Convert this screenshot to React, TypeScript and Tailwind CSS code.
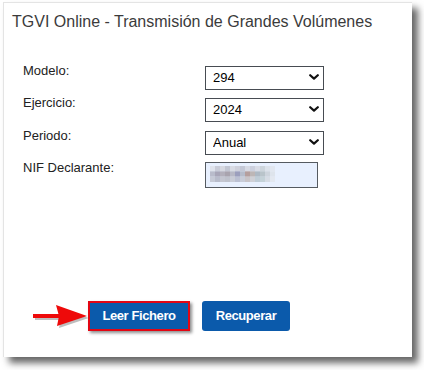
import type { ReactNode } from 'react';

const FONT = "font-['Liberation_Sans',Arial,sans-serif]";

// blurred NIF value, drawn as a pixel mosaic
const MOSAIC = [
  ['#dfe3ec', '#c9ccd8', '#d6d8e0', '#c2c6d2', '#d8dbe4', '#cfd1dc', '#c4c8d6', '#d7dae4', '#ccd0de', '#d9dce6', '#cdd5dc', '#dce2ea', '#e2e7f0'],
  ['#b9bccb', '#a8a6b8', '#b3b0bb', '#a9a4ae', '#b8b9c6', '#9c9fbd', '#b6bccb', '#b59f9e', '#bdb6b6', '#aeb9c4', '#b9c4ca', '#cdd4dc', '#dee4ec'],
  ['#c6cad6', '#b8bccb', '#c4c6d0', '#bfc2cc', '#c9ccd6', '#bbc0d2', '#c8ccd8', '#c8c4c8', '#cfd0d6', '#bfccd6', '#c4d2d8', '#d6dce4', '#e3e8f0'],
];

function Mosaic() {
  return (
    <svg width="65" height="16" viewBox="0 0 65 16" className="block">
      {MOSAIC.map((row, r) =>
        row.map((c, i) => (
          <rect key={`${r}-${i}`} x={i * 5} y={r * 5.33} width="5" height="5.4" fill={c} />
        ))
      )}
    </svg>
  );
}

function Chevron() {
  return (
    <svg width="10" height="6" viewBox="0 0 10 6" className="pointer-events-none absolute right-[5px] top-1/2 -translate-y-1/2">
      <path d="M1.2 1.2 L5 4.6 L8.8 1.2" fill="none" stroke="#111" strokeWidth="2.2" strokeLinecap="round" strokeLinejoin="round" />
    </svg>
  );
}

function Select({ value }: { value: string }) {
  return (
    <div className="relative w-[119px] h-6">
      <select
        defaultValue={value}
        className="appearance-none w-full h-full border border-[#474c52] bg-white pl-[7px] text-[13px] leading-none text-black outline-none"
      >
        <option value={value}>{value}</option>
      </select>
      <Chevron />
    </div>
  );
}

function Row({ label, mt, children }: { label: string; mt: string; children: ReactNode }) {
  return (
    <div className={`flex items-start ${mt}`}>
      <span className="w-[182px] -mt-[2px] text-[13px] leading-4 text-[#222]">{label}</span>
      {children}
    </div>
  );
}

function RedArrow() {
  return (
    <svg width="57" height="30" viewBox="0 0 57 30" className="block">
      <g transform="translate(2 2)" fill="#8a8a8a" opacity="0.55">
        <rect x="2" y="13" width="26" height="4" />
        <path d="M25 4 L56 15 L26 25 L28 15 Z" />
      </g>
      <rect x="2" y="13" width="26" height="4" fill="#ee0a0a" />
      <path d="M25 4 L56 15 L26 25 L28 15 Z" fill="#ee0a0a" />
    </svg>
  );
}

export default function App() {
  return (
    <div className={`w-[424px] h-[370px] bg-white pt-[2px] pl-[3px] ${FONT}`}>
      <div className="w-[409px] h-[355px] bg-white border-l border-t border-[#e4e4e4] shadow-[6px_6px_7px_rgba(0,0,0,0.6)] flex flex-col">

        {/* Title */}
        <h1 className="pl-[8px] pt-[9px] text-[16px] leading-5 text-[#3b3b3b]">
          TGVI Online - Transmisión de Grandes Volúmenes
        </h1>

        {/* Form */}
        <div className="pl-[19px] mt-[33px]">
          <Row label="Modelo:" mt="mt-0">
            <Select value="294" />
          </Row>
          <Row label="Ejercicio:" mt="mt-2">
            <Select value="2024" />
          </Row>
          <Row label="Periodo:" mt="mt-[9px]">
            <Select value="Anual" />
          </Row>
          <Row label="NIF Declarante:" mt="mt-2">
            <div className="w-[113px] h-[26px] border border-[#555a60] bg-[#e8f0fe] pl-[4px] pt-[3px]">
              <Mosaic />
            </div>
          </Row>
        </div>

        {/* Buttons */}
        <div className="mt-[113px] pl-[27px] flex items-center">
          <RedArrow />
          <button className="w-[102px] h-[30px] border-2 border-[#e30613] bg-[#0b5aab] text-white text-[13px] font-bold tracking-[-0.4px] shadow-[2px_2px_3px_rgba(0,0,0,0.45)]">
            Leer Fichero
          </button>
          <button className="ml-3 w-[88px] h-[30px] rounded-[3px] bg-[#0b5aab] text-white text-[13px] font-bold tracking-[-0.4px]">
            Recuperar
          </button>
        </div>

      </div>
    </div>
  );
}
